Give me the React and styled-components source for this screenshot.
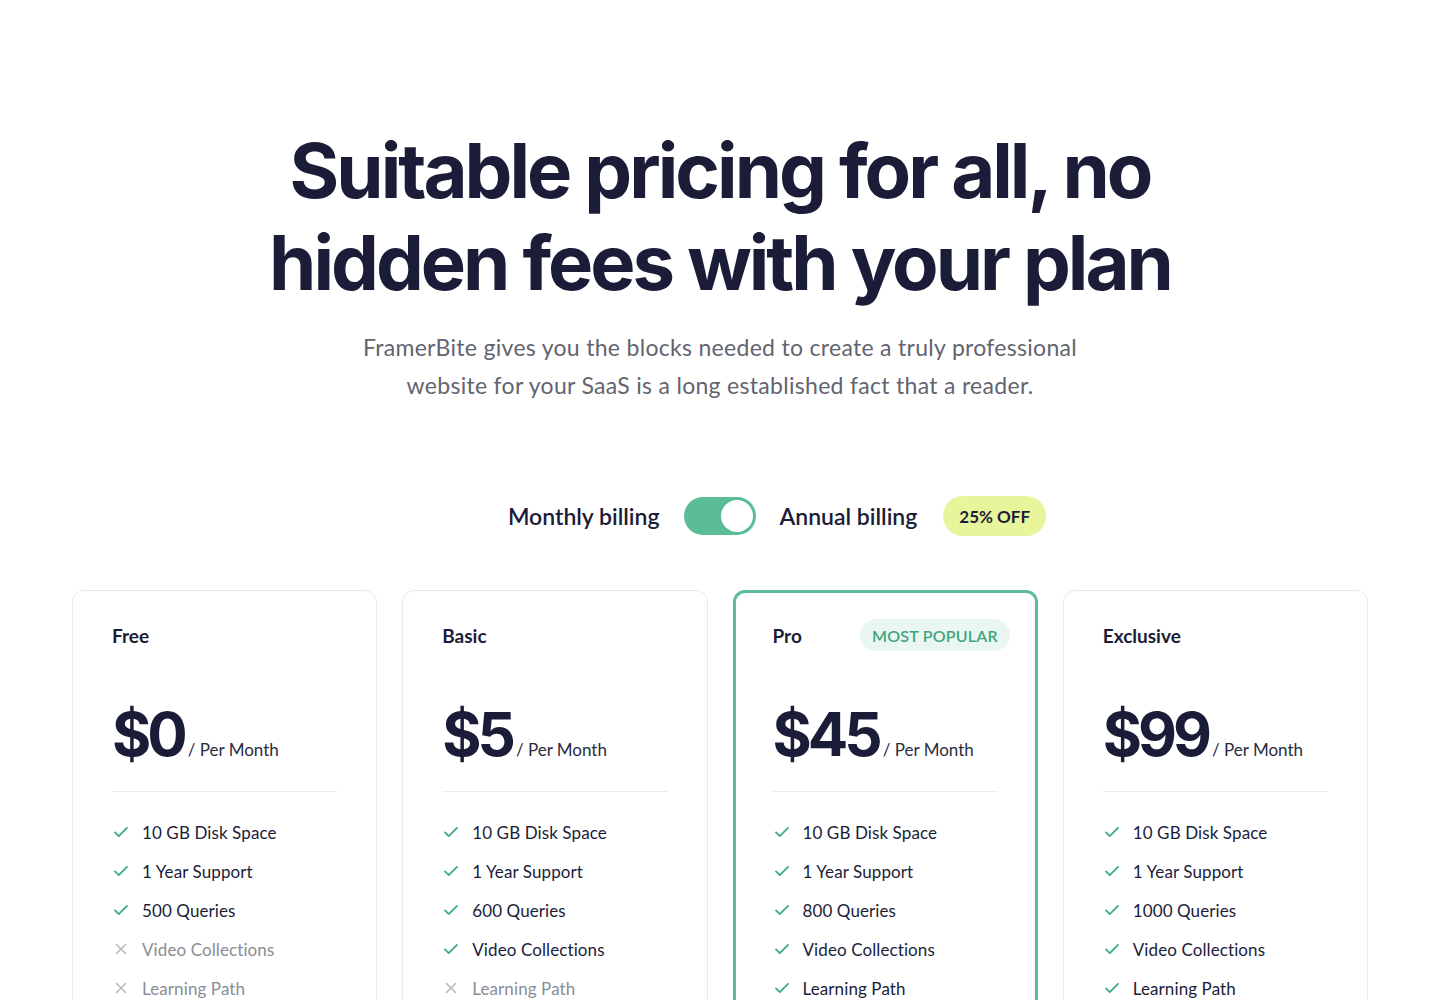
import React, { useState } from 'react';
import styled, { createGlobalStyle } from 'styled-components';

const GlobalStyle = createGlobalStyle`
  * { box-sizing: border-box; }
  body {
    margin: 0;
    background: #fff;
    font-family: 'Lato', 'Inter', sans-serif;
    color: #1b1d38;
  }
`;

const Page = styled.div`
  width: 1440px;
  height: 1000px;
  overflow: hidden;
  display: flex;
  flex-direction: column;
  align-items: center;
`;

const Heading = styled.h1`
  margin: 124px 0 0;
  width: 1000px;
  text-align: center;
  font-family: 'Inter', sans-serif;
  font-size: 76px;
  font-weight: 700;
  line-height: 92px;
  letter-spacing: -3px;
  color: #1b1d38;
`;

const Subtitle = styled.p`
  margin: 20px 0 0;
  width: 760px;
  text-align: center;
  font-size: 23px;
  letter-spacing: 0.3px;
  line-height: 38px;
  color: #62646f;
`;

const BillingRow = styled.div`
  margin-top: 92px;
  margin-left: 114px;
  display: flex;
  align-items: center;
  gap: 24px;
`;

const BillingLabel = styled.span`
  font-size: 23px;
  font-weight: 600;
  color: #1b1d38;
`;

const Toggle = styled.button`
  width: 72px;
  height: 38px;
  border-radius: 19px;
  border: none;
  padding: 3px;
  background: #5bbd95;
  display: flex;
  justify-content: ${({ $on }) => ($on ? 'flex-end' : 'flex-start')};
  cursor: pointer;
`;

const Knob = styled.span`
  width: 32px;
  height: 32px;
  border-radius: 50%;
  background: #fff;
`;

const OffBadge = styled.span`
  margin-left: 2px;
  padding: 0 16px;
  height: 40px;
  display: flex;
  align-items: center;
  border-radius: 20px;
  background: #e8f59b;
  font-size: 17px;
  font-weight: 700;
  color: #1b1d38;
`;

const Cards = styled.div`
  margin-top: 54px;
  width: 1296px;
  display: grid;
  grid-template-columns: repeat(4, 1fr);
  gap: 25px;
`;

const Card = styled.div`
  height: 480px;
  border: ${({ $featured }) => ($featured ? '3px solid #5dbd96' : '1px solid #e6eaee')};
  border-radius: 12px;
  padding: ${({ $featured }) => ($featured ? '25px 37px' : '27px 39px')};
`;

const CardHead = styled.div`
  height: 34px;
  display: flex;
  align-items: center;
  justify-content: space-between;
`;

const PlanName = styled.span`
  font-size: 19px;
  font-weight: 700;
  color: #1b1d38;
`;

const Popular = styled.span`
  height: 32px;
  padding: 0 12px;
  margin-right: -12px;
  display: flex;
  align-items: center;
  border-radius: 16px;
  background: #eaf6f1;
  color: #3ba67b;
  font-size: 16px;
  font-weight: 600;
  letter-spacing: 0.2px;
`;

const PriceRow = styled.div`
  margin-top: 46px;
  display: flex;
  align-items: baseline;
  padding-bottom: 21px;
  border-bottom: 1px solid #e8ecef;
`;

const Price = styled.span`
  font-family: 'Inter', sans-serif;
  font-size: 60px;
  font-weight: 700;
  letter-spacing: -4px;
  line-height: 72px;
  margin-right: 4px;
  color: #1b1d38;
`;

const Period = styled.span`
  font-size: 17px;
  color: #2a2c3f;
`;

const Features = styled.ul`
  list-style: none;
  margin: 29px 0 0;
  padding: 0;
  display: flex;
  flex-direction: column;
  gap: 17px;
`;

const Feature = styled.li`
  display: flex;
  align-items: center;
  gap: 12px;
  height: 22px;
  font-size: 17px;
  letter-spacing: 0.1px;
  color: ${({ $off }) => ($off ? '#8a8c96' : '#1b1d38')};
`;

const Check = () => (
  <svg width="18" height="18" viewBox="0 0 24 24" fill="none" stroke="#3fae82" strokeWidth="2.5" strokeLinecap="round" strokeLinejoin="round">
    <path d="M4 12.5l5 5L20 6.5" />
  </svg>
);

const Cross = () => (
  <svg width="18" height="18" viewBox="0 0 24 24" fill="none" stroke="#b4b6bd" strokeWidth="2" strokeLinecap="round">
    <path d="M6 6l12 12M18 6L6 18" />
  </svg>
);

const plans = [
  { name: 'Free', price: '$0', queries: '500', video: false, path: false },
  { name: 'Basic', price: '$5', queries: '600', video: true, path: false },
  { name: 'Pro', price: '$45', queries: '800', video: true, path: true, featured: true },
  { name: 'Exclusive', price: '$99', queries: '1000', video: true, path: true },
];

export default function App() {
  const [annual, setAnnual] = useState(true);

  return (
    <Page>
      <GlobalStyle />
      <Heading>
        Suitable pricing for all, no
        <br />
        hidden fees with your plan
      </Heading>
      <Subtitle>
        FramerBite gives you the blocks needed to create a truly professional website for your SaaS is a long established fact that a reader.
      </Subtitle>
      <BillingRow>
        <BillingLabel>Monthly billing</BillingLabel>
        <Toggle $on={annual} onClick={() => setAnnual(!annual)} aria-label="Toggle billing">
          <Knob />
        </Toggle>
        <BillingLabel>Annual billing</BillingLabel>
        <OffBadge>25% OFF</OffBadge>
      </BillingRow>
      <Cards>
        {plans.map((p) => {
          const items = [
            { text: '10 GB Disk Space', on: true },
            { text: '1 Year Support', on: true },
            { text: `${p.queries} Queries`, on: true },
            { text: 'Video Collections', on: p.video },
            { text: 'Learning Path', on: p.path },
          ];
          return (
            <Card key={p.name} $featured={p.featured}>
              <CardHead>
                <PlanName>{p.name}</PlanName>
                {p.featured && <Popular>MOST POPULAR</Popular>}
              </CardHead>
              <PriceRow>
                <Price>{p.price}</Price>
                <Period>/ Per Month</Period>
              </PriceRow>
              <Features>
                {items.map((it) => (
                  <Feature key={it.text} $off={!it.on}>
                    {it.on ? <Check /> : <Cross />}
                    {it.text}
                  </Feature>
                ))}
              </Features>
            </Card>
          );
        })}
      </Cards>
    </Page>
  );
}
